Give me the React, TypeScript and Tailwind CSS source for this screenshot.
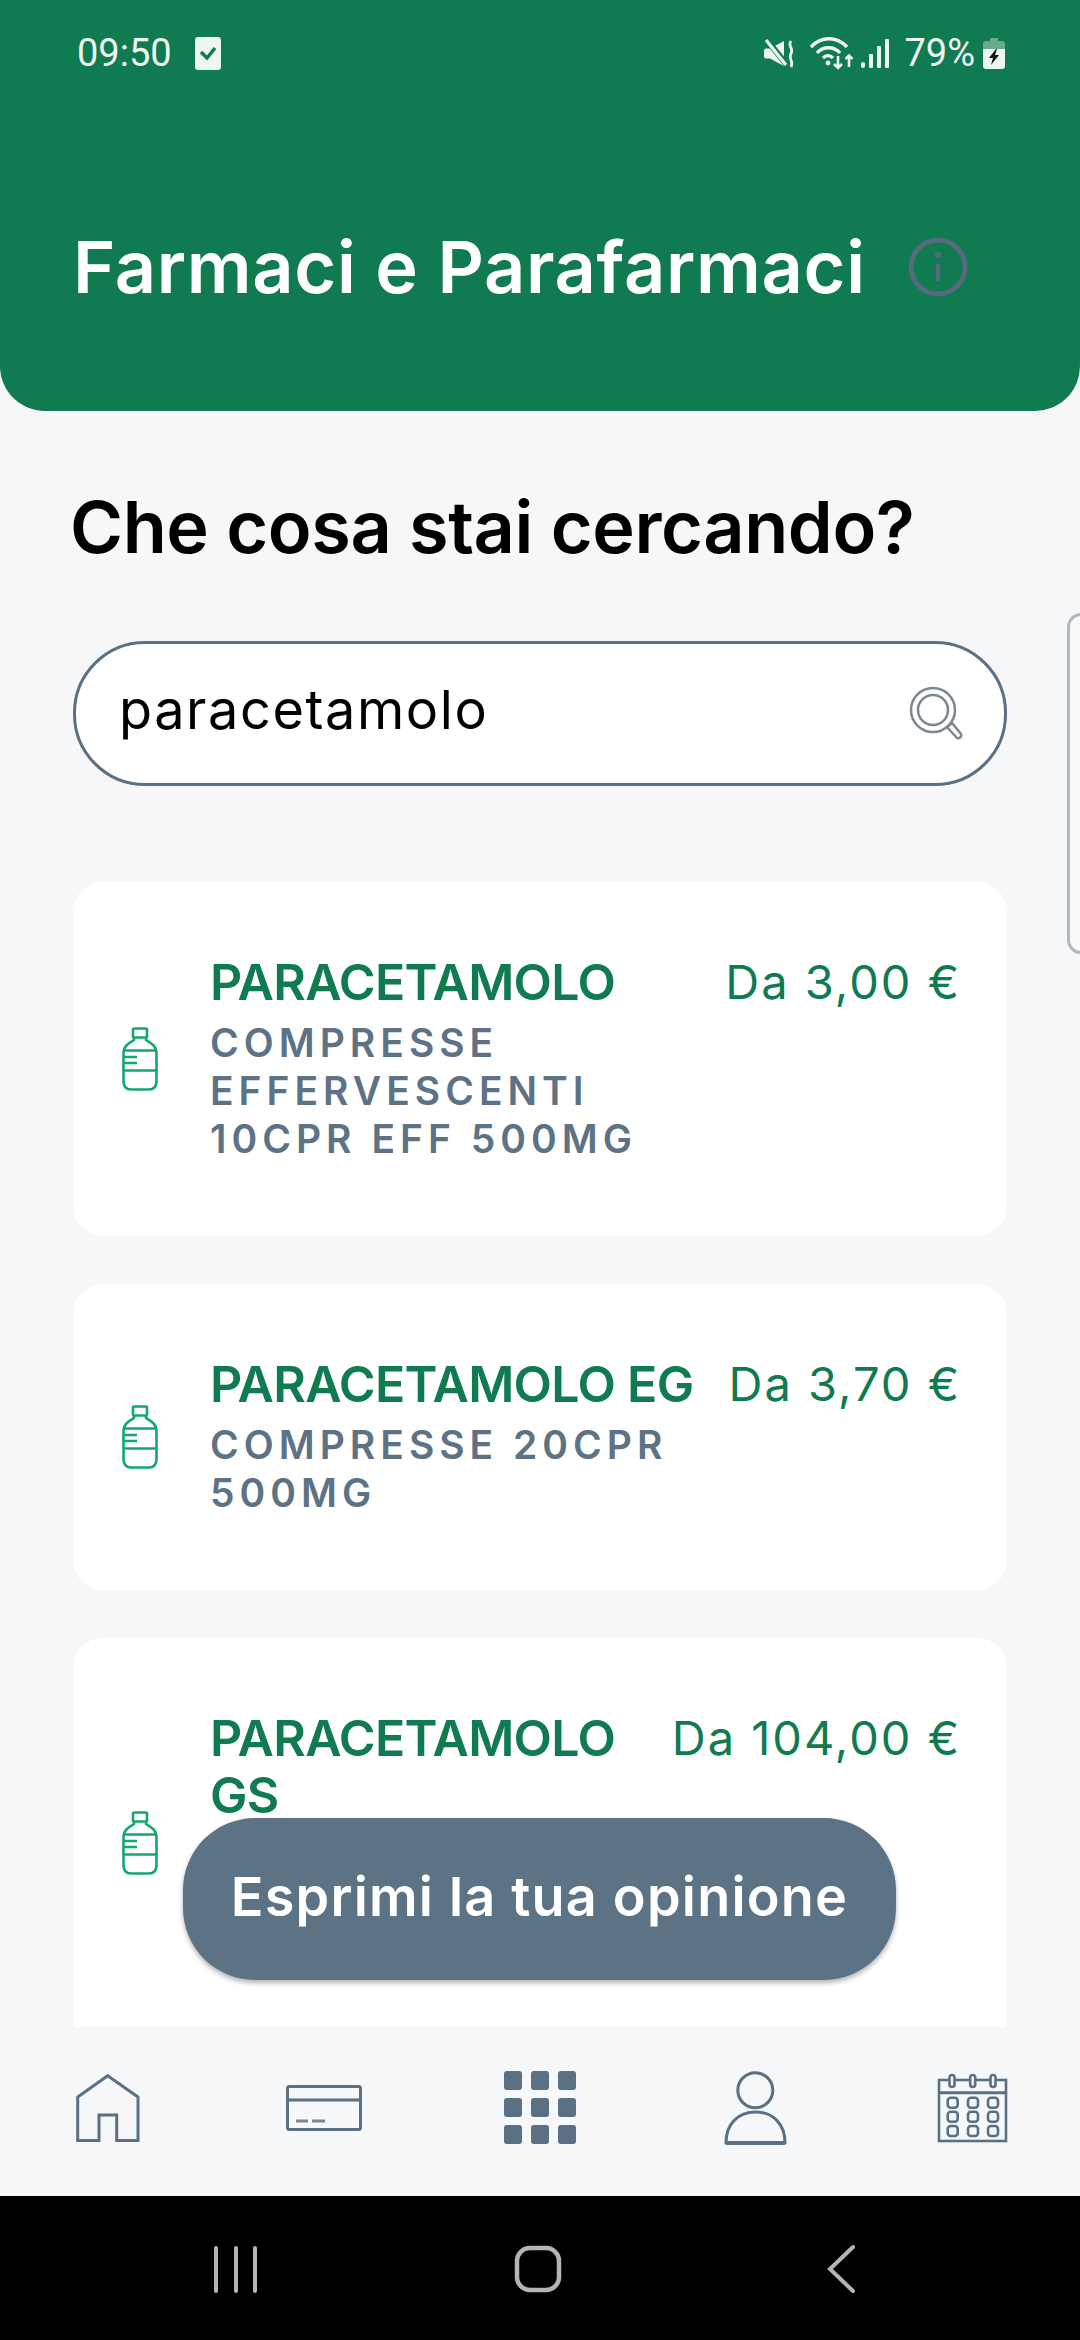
import React from 'react';

const products = [
  { name: ['PARACETAMOLO'], details: ['COMPRESSE', 'EFFERVESCENTI', '10CPR EFF 500MG'], price: 'Da 3,00 €' },
  { name: ['PARACETAMOLO EG'], details: ['COMPRESSE 20CPR', '500MG'], price: 'Da 3,70 €' },
  { name: ['PARACETAMOLO', 'GS'], details: [], price: 'Da 104,00 €' },
];

function Bottle() {
  return (
    <svg width="36" height="64" viewBox="0 0 36 64" fill="none" stroke="#12A86E" strokeWidth="2.6" className="shrink-0">
      <rect x="11" y="1.5" width="14" height="9" rx="1" />
      <path d="M12 10.5V13C7 16 1.5 19 1.5 26V54C1.5 59 4 62.5 9 62.5H27C32 62.5 34.5 59 34.5 54V26C34.5 19 29 16 24 13V10.5" />
      <path d="M1.5 23.5H34.5M1.5 43.5H34.5M1.5 30H15M1.5 36H15" />
    </svg>
  );
}

function StatusIcons() {
  return (
    <div className="flex items-center">
      <svg width="30" height="29" viewBox="0 0 30 29" fill="none">
        <path d="M0 11.5C0 10.5 1 9.5 2 9.5H6L20 2V27L6 19.5H2C1 19.5 0 18.5 0 17.5Z" fill="#EEF6F1" />
        <path d="M2 0L23 26" stroke="#107A50" strokeWidth="6" />
        <path d="M2 1L22 26" stroke="#EEF6F1" strokeWidth="3.2" />
        <path d="M27 2C23 7 30 9 27 14.5C24 20 30 22 27 28" stroke="#EEF6F1" strokeWidth="2.8" />
      </svg>
      <svg width="44" height="33" viewBox="0 0 44 33" fill="none" stroke="#EEF6F1" strokeWidth="3.4" className="ml-[16px]">
        <path d="M1 10C11 -1 27 -1 37 10" />
        <path d="M7 16C13 9 24 9 30 16" />
        <path d="M13 21C16 18 20 18 23 21" />
        <circle cx="18" cy="26" r="2.4" fill="#EEF6F1" stroke="none" />
        <path d="M28 19V31M24 27L28 31L32 27" strokeWidth="2.6" />
        <path d="M39 30V19M35.5 22L39 18.5L42.5 22" strokeWidth="2.6" />
      </svg>
      <svg width="28" height="29" viewBox="0 0 28 29" fill="#EEF6F1" className="ml-[7px]">
        <rect x="0" y="23" width="4" height="6" rx="2" />
        <rect x="8" y="15" width="4" height="14" rx="1" />
        <rect x="16" y="7" width="4" height="22" rx="1" />
        <rect x="24" y="0" width="4" height="29" rx="1" />
      </svg>
      <span className="ml-[15px] font-[Roboto] text-[38px] leading-none text-[#EEF6F1]">79%</span>
      <svg width="22" height="31" viewBox="0 0 22 31" className="ml-[8px]">
        <path d="M7 0H15V3H19C21 3 22 4 22 6V11H0V6C0 4 1 3 3 3H7Z" fill="#68A98C" />
        <path d="M0 11H22V28C22 30 21 31 19 31H3C1 31 0 30 0 28Z" fill="#EEF6F1" />
        <path d="M13 11L6 20H10L8 27L16 17H12L14 11Z" fill="#111" />
      </svg>
    </div>
  );
}

function NavIcons() {
  const stroke = '#5B7083';
  return (
    <nav className="h-[169px] shrink-0 flex items-center justify-between pl-[76px] pr-[71px] pb-[8px]">
      <svg width="64" height="68" viewBox="0 0 64 68" fill="none" stroke={stroke} strokeWidth="3">
        <path d="M31.7 1.7L62 23V66.5H40.7V41H23V66.5H1.7V23Z" />
      </svg>
      <svg width="76" height="46" viewBox="0 0 76 46" fill="none" stroke={stroke} strokeWidth="3">
        <rect x="1.5" y="1.5" width="73" height="43" rx="2" />
        <path d="M1.5 15H74.5" />
        <path d="M10 36H22M26 36H39" stroke="#7B8894" />
      </svg>
      <svg width="72" height="73" viewBox="0 0 72 73" fill={stroke} className="-translate-x-[4px]">
        {[0, 27, 54].map((y) =>
          [0, 27, 54].map((x) => <rect key={`${x}-${y}`} x={x} y={y} width="18" height="19" rx="3" />),
        )}
      </svg>
      <svg width="66" height="78" viewBox="0 0 66 78" fill="none" stroke={stroke} strokeWidth="3" className="-translate-x-[2px]">
        <circle cx="32.3" cy="21.3" r="17.5" />
        <path d="M3 73.7C3 55 15 43 32.5 43C50 43 62 55 62 73.7Z" />
        <path d="M3 74H62" strokeWidth="4" />
      </svg>
      <svg width="72" height="70" viewBox="0 0 72 70" fill="none" stroke={stroke} strokeWidth="2.6">
        <rect x="2" y="7" width="67" height="61" />
        <path d="M2 19.7H69" strokeWidth="3" />
        {[15, 35.7, 56].map((x) => (
          <rect key={x} x={x - 2.5} y="2" width="5" height="12" rx="2.5" fill="#F5F7F9" />
        ))}
        {[29.7, 43.7, 58].map((y) =>
          [15.7, 36, 56].map((x) => <rect key={`${x}-${y}`} x={x - 5} y={y - 5} width="10" height="10" rx="3" />),
        )}
      </svg>
    </nav>
  );
}

export default function App() {
  return (
    <div className="relative w-[1080px] h-[2340px] flex flex-col overflow-hidden bg-[#F5F7F9] font-[Inter]">
      <div className="absolute right-[-10px] top-[613px] w-[23px] h-[341px] rounded-l-[14px] border-[3px] border-[#B4B8BC] bg-[#F7F9FA]" />

      <header className="h-[411px] shrink-0 flex flex-col bg-[#107A50] rounded-b-[45px] px-[73px]">
        <div className="h-[106px] flex items-center justify-between ml-[4px] mr-[2px]">
          <div className="flex items-center gap-[23px]">
            <span className="font-[Roboto] text-[38px] leading-none text-[#EEF6F1]">09:50</span>
            <svg width="26" height="33" viewBox="0 0 26 33">
              <rect width="26" height="33" rx="3" fill="#EEF6F1" />
              <path d="M6 15L12 21L20 11" fill="none" stroke="#107A50" strokeWidth="3.5" />
            </svg>
          </div>
          <StatusIcons />
        </div>
        <div className="mt-[131px] flex items-center">
          <h1 className="text-[72px] leading-[60px] font-semibold tracking-[0.7px] text-white whitespace-nowrap">Farmaci e Parafarmaci</h1>
          <svg width="60" height="60" viewBox="0 0 60 60" fill="none" stroke="#566B7E" strokeWidth="5" className="ml-[42px] shrink-0">
            <circle cx="30" cy="30" r="27" />
            <circle cx="30" cy="18" r="3" fill="#566B7E" stroke="none" />
            <path d="M30 27V44" strokeWidth="4" />
          </svg>
        </div>
      </header>

      <main className="flex-1 min-h-0 overflow-hidden px-[73px] pt-[71px]">
        <h2 className="-ml-[3px] text-[72px] leading-[90px] font-semibold tracking-[-0.4px] text-black whitespace-nowrap">Che cosa stai cercando?</h2>
        <div className="mt-[69px] h-[145px] flex items-center justify-between rounded-[72px] border-[3px] border-[#5B7083] bg-white pl-[43px] pr-[24px]">
          <span className="pb-[8px] text-[54px] tracking-[1.6px] text-black">paracetamolo</span>
          <svg width="80" height="80" viewBox="0 0 80 80" fill="none" stroke="#7B8894" strokeWidth="2.5">
            <circle cx="33" cy="36" r="22" />
            <circle cx="33" cy="36" r="15" />
            <path d="M47 53L52 49L61 60C62 62 60 65 57 64Z" />
          </svg>
        </div>

        <div className="mt-[96px] flex flex-col gap-[48px]">
          {products.map((p) => (
            <div key={p.name.join(' ')} className="flex items-center rounded-[30px] bg-white pl-[49px] pr-[48px] pt-[72px] pb-[73px]">
              <Bottle />
              <div className="ml-[52px] flex-1 min-w-0">
                <div className="text-[50px] leading-[57px] font-semibold tracking-[-0.7px] text-[#107A50]">
                  {p.name.map((line) => (
                    <div key={line} className="whitespace-nowrap">{line}</div>
                  ))}
                </div>
                <div className="mt-[8px] text-[39px] leading-[48px] font-semibold tracking-[5px] text-[#5E7285]">
                  {p.details.map((line) => (
                    <div key={line} className="whitespace-nowrap">{line}</div>
                  ))}
                  {p.details.length === 0 && <div className="h-[144px]" />}
                </div>
              </div>
              <div className="self-start shrink-0 -mr-[2px] text-[47px] leading-[55px] tracking-[2px] text-[#107A50]">{p.price}</div>
            </div>
          ))}
        </div>
      </main>

      <button className="absolute left-[183px] top-[1818px] w-[713px] h-[162px] rounded-[72px] bg-[#5B7384] pb-[5px] shadow-[0_3px_5px_rgba(0,0,0,0.3)] text-[54px] font-semibold tracking-[1.2px] text-white">
        Esprimi la tua opinione
      </button>

      <NavIcons />

      <div className="h-[144px] shrink-0 bg-black flex items-center justify-center">
        <svg width="660" height="60" viewBox="0 0 660 60" fill="none" stroke="#B5B5B5" strokeWidth="4" strokeLinecap="round" className="ml-[6px]">
          <path d="M3 10V53M23 10V53M42 10V53" />
          <rect x="304" y="10" width="42" height="42" rx="13" strokeWidth="4.5" />
          <path d="M640 9L617 31L640 53" />
        </svg>
      </div>
    </div>
  );
}
